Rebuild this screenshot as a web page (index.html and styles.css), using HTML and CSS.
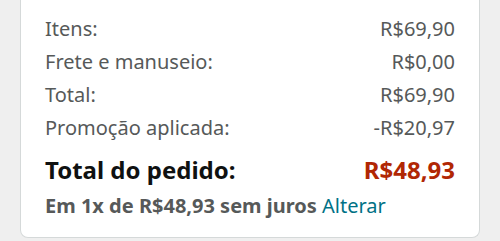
FILE: index.html
```html
<!DOCTYPE html>
<html lang="pt-BR">
<head>
  <meta charset="UTF-8" />
  <meta name="viewport" content="width=device-width, initial-scale=1" />
  <title>Resumo do pedido</title>
  <link rel="stylesheet" href="styles.css">
</head>
<body>
  <div class="summary-card">
    <div class="line">
      <span>Itens:</span>
      <span>R$69,90</span>
    </div>
    <div class="line">
      <span>Frete e manuseio:</span>
      <span>R$0,00</span>
    </div>
    <div class="line">
      <span>Total:</span>
      <span>R$69,90</span>
    </div>
    <div class="line">
      <span>Promoção aplicada:</span>
      <span>-R$20,97</span>
    </div>

    <div class="line grand-total">
      <span>Total do pedido:</span>
      <span class="price">R$48,93</span>
    </div>
    <div class="installments">
      Em 1x de R$48,93 sem juros <a href="#" class="link">Alterar</a>
    </div>
  </div>
</body>
</html>
```

FILE: styles.css
```css
body {
  font-family: "Noto Sans", Roboto, Arial, sans-serif;
  background: #efefef;
  margin: 0;
  padding: 0 20px;
}

.summary-card {
  background: #fff;
  border: 1px solid #d5d9d9;
  border-top: none;
  border-radius: 0 0 8px 8px;
  padding: 12px 24px 13px 24px;
}

.line {
  display: flex;
  justify-content: space-between;
  font-size: 20px;
  line-height: 33px;
  color: #565959;
}

.grand-total {
  margin-top: 8px;
  font-size: 24px;
  font-weight: bold;
  line-height: 36px;
  color: #0f1111;
}

.grand-total .price {
  color: #b12704;
}

.installments {
  font-size: 20px;
  font-weight: bold;
  line-height: 36px;
  color: #565959;
}

.link {
  font-weight: normal;
  color: #007185;
  text-decoration: none;
}
```
